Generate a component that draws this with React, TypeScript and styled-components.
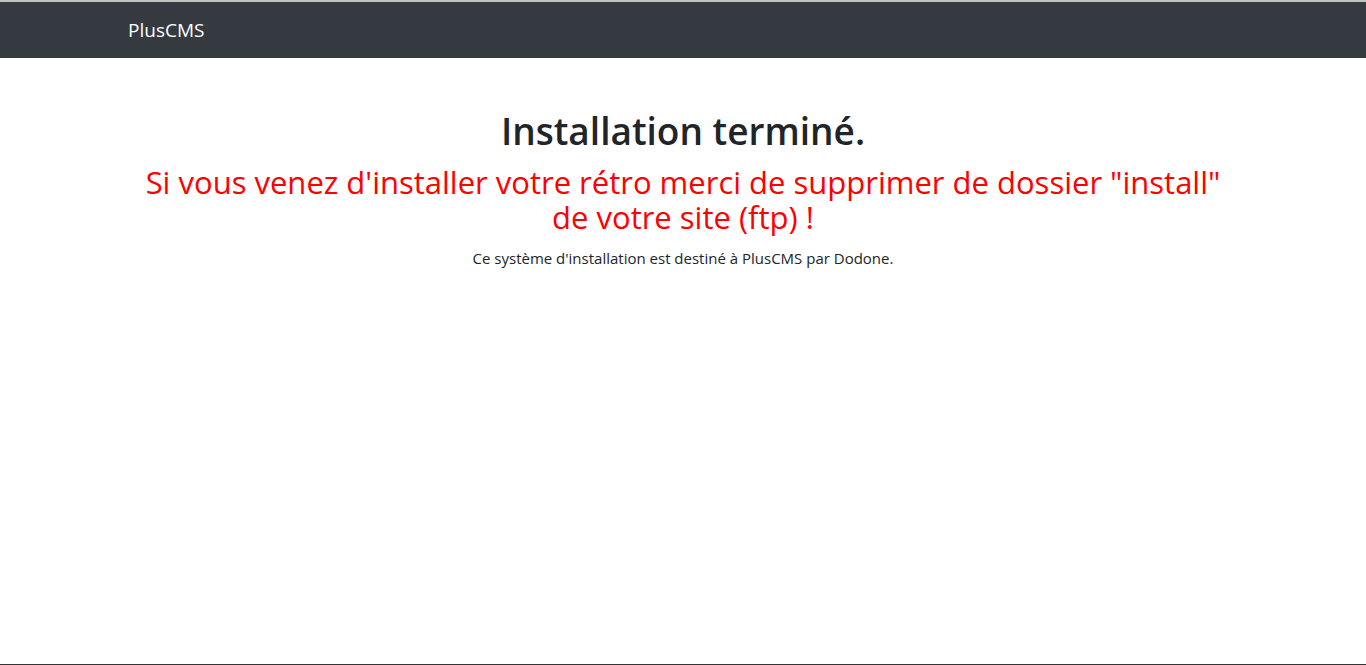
import * as React from "react";
import styled, { createGlobalStyle } from "styled-components";

const GlobalStyle = createGlobalStyle`
  html, body {
    margin: 0;
    padding: 0;
    background: #fff;
  }
  body {
    font-family: "Open Sans", "Noto Sans", sans-serif;
    font-size: 16px;
    line-height: 1.5;
    color: #212529;
    border-top: 2px solid #c4c4c4;
  }
`;

const Page = styled.div`
  height: calc(100vh - 2px);
  box-sizing: border-box;
  display: flex;
  flex-direction: column;
  border-bottom: 1px solid #333;
`;

const Navbar = styled.nav`
  background-color: #343a40;
  padding: 8px 0;
`;

const Container = styled.div`
  width: 1140px;
  margin: 0 auto;
  padding: 0 15px;
  box-sizing: border-box;
`;

const Brand = styled.a`
  display: inline-block;
  color: #fff;
  font-size: 19px;
  line-height: 30px;
  padding: 5px 0;
  text-decoration: none;
`;

const Main = styled(Container)`
  flex: 1;
  padding-top: 51px;
  text-align: center;
`;

const Title = styled.h2`
  margin: 0 0 12px;
  font-size: 37px;
  font-weight: 600;
  line-height: 1.2;
`;

const Warning = styled.h3`
  margin: 0 0 12px;
  font-size: 31px;
  font-weight: 400;
  line-height: 35px;
  color: #ff0000;
`;

const Note = styled.p`
  margin: 0;
  font-size: 15px;
`;

const App = () => {
  return (
    <Page>
      <GlobalStyle />
      <Navbar>
        <Container>
          <Brand href="#">PlusCMS</Brand>
        </Container>
      </Navbar>
      <Main>
        <Title>Installation terminé.</Title>
        <Warning>
          Si vous venez d'installer votre rétro merci de supprimer de dossier "install" de votre site (ftp) !
        </Warning>
        <Note>Ce système d'installation est destiné à PlusCMS par Dodone.</Note>
      </Main>
    </Page>
  );
};

export default App;
